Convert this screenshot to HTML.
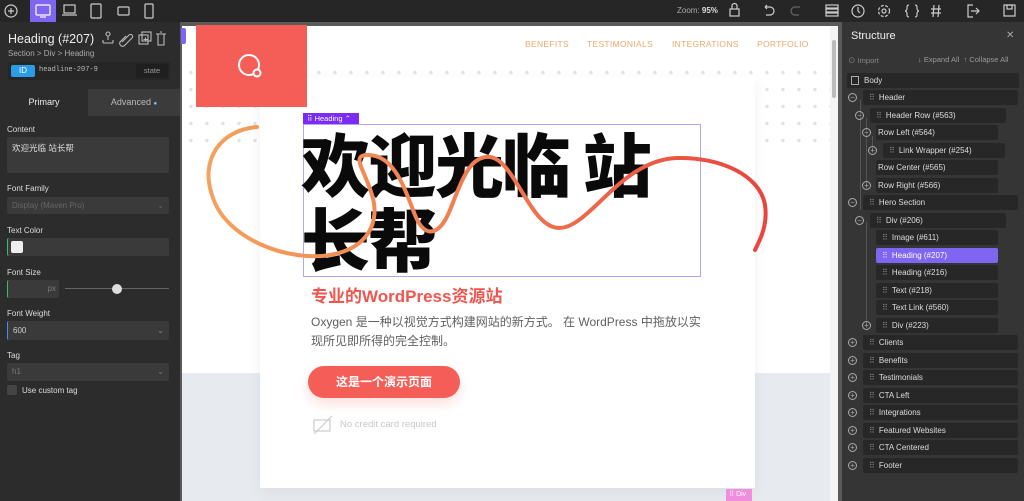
<!DOCTYPE html>
<html><head><meta charset="utf-8">
<style>
*{margin:0;padding:0;box-sizing:border-box}
body{width:1024px;height:501px;overflow:hidden;background:#2c2c2c;font-family:"Liberation Sans","Noto Sans CJK SC",sans-serif;position:relative;color:#ddd}
.a{position:absolute}
.top{left:0;top:0;width:1024px;height:22px;background:#262626}
.lbl{font-size:8px;color:#ddd}
.field{background:#3a3a3a;border-radius:2px}
.rp{left:842px;top:22px;width:182px;height:479px;background:#353535}
.row{position:absolute;height:15px;background:#272727;border-radius:2px;font-size:8px;color:#ddd;line-height:15px;padding-left:6px}
.row i{font-style:normal;color:#888;margin-right:5px;letter-spacing:-1px}
.circ{position:absolute;width:9px;height:9px;border:1px solid #aaa;border-radius:50%;font-size:8px;line-height:7px;text-align:center;color:#aaa}
.nav{font-size:8.5px;color:#eba96c;top:39px;letter-spacing:.3px}
</style></head><body>
<div class="a top"></div>
<div class="a" style="left:30px;top:0;width:26px;height:22px;background:#7e66f2"></div>
<svg class="a" style="left:0;top:0" width="180" height="22" fill="none" stroke="#ccc" stroke-width="1.2">
<circle cx="11" cy="11" r="6"/><path d="M11 8v6M8 11h6"/>
<rect x="36" y="5" width="14" height="10" rx="1" stroke="#fff"/><path d="M40 17h6" stroke="#fff"/>
<rect x="64" y="5" width="11" height="8"/><path d="M62 15h15"/>
<rect x="91" y="4" width="10" height="14" rx="1"/>
<rect x="118" y="7" width="11" height="8" rx="1"/>
<rect x="145" y="4" width="8" height="14" rx="1"/>
</svg>
<div class="a" style="left:677px;top:6px;font-size:8px;color:#aaa">Zoom: <b style="color:#ddd">95%</b></div>
<svg class="a" style="left:720px;top:0" width="304" height="22" fill="none" stroke="#ccc" stroke-width="1.2">
<rect x="10" y="9" width="9" height="7"/><path d="M12 9V6a2.5 2.5 0 0 1 5 0v3"/>
<path d="M45 7h5a4 4 0 0 1 0 8h-4M45 7l2-2M45 7l2 2"/>
<path d="M80 7h-5a4 4 0 0 0 0 8h4" stroke="#666"/>
<rect x="106" y="5" width="12" height="3"/><rect x="106" y="9" width="12" height="3"/><rect x="106" y="13" width="12" height="3"/>
<circle cx="138" cy="11" r="6"/><path d="M138 7v4l2 2"/>
<circle cx="164" cy="11" r="2"/><circle cx="164" cy="11" r="5.5" stroke-dasharray="3 1.5"/>
<path d="M189 5c-2 0-2 1-2 3s-1 3-2 3c1 0 2 1 2 3s0 3 2 3M195 5c2 0 2 1 2 3s1 3 2 3c-1 0-2 1-2 3s0 3-2 3"/>
<path d="M214 5l-1 12M219 5l-1 12M211 9h10M211 13h10"/>
<path d="M253 5h-5v12h5M251 11h8M256 8l3 3-3 3"/>
<rect x="284" y="5" width="11" height="11"/><rect x="287" y="5" width="5" height="4"/>
</svg>
<div class="a" style="left:8px;top:32px;font-size:12.5px;color:#eee">Heading (#207)</div>
<svg class="a" style="left:100px;top:30px" width="70" height="18" fill="none" stroke="#bbb" stroke-width="1.1">
<circle cx="8" cy="4" r="2"/><path d="M8 6v4M3 13h10M3 10v3M13 10v3"/>
<path d="M22 12l7-7a2 2 0 0 1 3 3l-8 8a3 3 0 0 1-4-4l6-6"/>
<rect x="39" y="5" width="9" height="9"/><rect x="42" y="2" width="9" height="9"/><path d="M43.5 9.5h4M45.5 7.5v4"/>
<path d="M56 4h10M58 4v11h6V4M60 2h2"/>
</svg>
<div class="a" style="left:8px;top:49px;font-size:8px;color:#aaa">Section &gt; Div &gt; Heading</div>
<div class="a" style="left:8px;top:62px;width:162px;height:18px;background:#262626;border-radius:2px"></div>
<div class="a" style="left:11px;top:64.5px;width:24px;height:12px;background:#2a9ce8;border-radius:2px;font-size:8px;color:#fff;text-align:center;line-height:12px">ID</div>
<div class="a" style="left:39px;top:66px;font-size:7px;font-family:'Liberation Mono',monospace;color:#bbb">headline-207-9</div>
<div class="a" style="left:136px;top:64px;width:32px;height:14px;background:#1f1f1f;font-size:7.5px;color:#999;text-align:center;line-height:14px">state</div>
<div class="a" style="left:0;top:89px;width:88px;height:27px;background:#2c2c2c;font-size:9px;color:#eee;text-align:center;line-height:27px">Primary</div>
<div class="a" style="left:88px;top:89px;width:92px;height:27px;background:#3b3b3b;font-size:9px;color:#bbb;text-align:center;line-height:27px">Advanced <span style="color:#7ec8ff;font-size:6px">●</span></div>
<div class="a" style="left:0;top:116px;width:180px;height:385px;background:#2c2c2c"></div>
<div class="a lbl" style="left:7px;top:125px">Content</div>
<div class="a field" style="left:7px;top:137px;width:162px;height:36px;font-size:8.5px;padding:5px 5px;color:#ddd">欢迎光临 站长帮</div>
<div class="a lbl" style="left:7px;top:184px">Font Family</div>
<div class="a field" style="left:7px;top:197px;width:162px;height:17px;font-size:8px;padding:4px 5px;color:#666">Display (Maven Pro)<span style="float:right">⌄</span></div>
<div class="a lbl" style="left:7px;top:226px">Text Color</div>
<div class="a field" style="left:7px;top:238px;width:162px;height:18px;border-left:1px solid #3bb87a"></div>
<div class="a" style="left:11px;top:241px;width:12px;height:12px;background:#eee;border-radius:2px"></div>
<div class="a lbl" style="left:7px;top:268px">Font Size</div>
<div class="a field" style="left:7px;top:280px;width:52px;height:18px;border-left:1px solid #3bb87a;font-size:8px;color:#777;text-align:right;padding:4px 3px">px</div>
<div class="a" style="left:65px;top:288px;width:104px;height:1px;background:#666"></div>
<div class="a" style="left:112px;top:284px;width:10px;height:10px;background:#ddd;border-radius:50%"></div>
<div class="a lbl" style="left:7px;top:309px">Font Weight</div>
<div class="a field" style="left:7px;top:321px;width:162px;height:19px;border-left:1px solid #4b8ee8;font-size:8px;padding:5px 5px;color:#ccc">600<span style="float:right;color:#888">⌄</span></div>
<div class="a lbl" style="left:7px;top:351px">Tag</div>
<div class="a field" style="left:7px;top:363px;width:162px;height:18px;font-size:8px;padding:4px 5px;color:#777">h1<span style="float:right">⌄</span></div>
<div class="a" style="left:7px;top:385px;width:10px;height:10px;background:#444;border-radius:2px"></div>
<div class="a lbl" style="left:22px;top:386px">Use custom tag</div>
<div class="a" style="left:180px;top:22px;width:662px;height:479px;background:#5a5a5a"></div>
<div class="a" style="left:182px;top:26px;width:648px;height:475px;background:#fff;overflow:hidden">
 <div class="a" style="left:0;top:38px;width:648px;height:80px;background-image:radial-gradient(circle,#e2e2e2 1.5px,transparent 2px);background-size:16px 17px;background-position:1px 0"></div>
 <div class="a" style="left:0;top:347px;width:648px;height:130px;background:#e7ebf0"></div>
 <div class="a" style="left:78px;top:51px;width:495px;height:411px;background:#fff;box-shadow:0 4px 14px rgba(0,0,0,.06)"></div>
</div>
<div class="a" style="left:830px;top:26px;width:8px;height:475px;background:#f4f4f4"></div>
<div class="a" style="left:832px;top:40px;width:4px;height:58px;background:#bbb;border-radius:2px"></div>
<div class="a" style="left:181px;top:28px;width:5px;height:16px;background:#7e66f2;border-radius:0 2px 2px 0"></div>
<div class="a nav" style="left:525px">BENEFITS</div>
<div class="a nav" style="left:587px">TESTIMONIALS</div>
<div class="a nav" style="left:672px">INTEGRATIONS</div>
<div class="a nav" style="left:757px">PORTFOLIO</div>
<div class="a" style="left:196px;top:25px;width:111px;height:82px;background:#f55d57"></div>
<svg class="a" style="left:236px;top:52px" width="30" height="30" fill="none" stroke="#fff" stroke-width="2"><circle cx="13" cy="13" r="10"/><circle cx="21" cy="21" r="3.5" fill="#f55d57"/></svg>
<div class="a" style="left:303px;top:124px;width:398px;height:153px;border:1px solid #b7a3f0"></div>
<div class="a" style="left:303px;top:113px;width:56px;height:11px;background:#7a2bf5;font-size:7.5px;color:#fff;line-height:11px;padding-left:4px">⠿ Heading ⌃</div>
<div class="a" style="left:301px;top:124px;width:400px;font-size:69px;font-weight:900;line-height:75px;color:#0a0a0a;font-family:'Noto Sans CJK SC',sans-serif;letter-spacing:-2px">欢迎光临 站<br>长帮</div>
<svg class="a" style="left:0;top:0" width="842" height="501" fill="none">
<defs><linearGradient id="g" x1="200" y1="0" x2="770" y2="0" gradientUnits="userSpaceOnUse"><stop offset="0" stop-color="#f4a25e"/><stop offset=".5" stop-color="#f07a50"/><stop offset="1" stop-color="#e8443e"/></linearGradient></defs>
<path d="M257,127 C220,130 200,160 212,195 C225,240 290,262 330,255 C370,248 380,220 372,195 C365,170 350,155 368,155 C395,155 405,190 415,215 C425,240 440,235 450,210 C462,180 470,155 490,157 C515,160 530,228 559,228 C590,228 620,160 677,158 C720,157 760,175 765,205 C768,225 760,240 755,250" stroke="url(#g)" stroke-width="4" stroke-linecap="round"/>
</svg>
<div class="a" style="left:311px;top:282px;font-size:17px;font-weight:700;color:#f0564f">专业的WordPress资源站</div>
<div class="a" style="left:311px;top:313px;width:400px;font-size:12px;line-height:19px;color:#606060">Oxygen 是一种以视觉方式构建网站的新方式。 在 WordPress 中拖放以实现所见即所得的完全控制。</div>
<div class="a" style="left:308px;top:366px;width:152px;height:32px;background:#f55d57;border-radius:16px;font-size:12px;font-weight:700;color:#fff;text-align:center;line-height:32px;box-shadow:0 6px 12px rgba(245,93,87,.2)">这是一个演示页面</div>
<svg class="a" style="left:312px;top:415px" width="22" height="20" fill="none" stroke="#ccc" stroke-width="1.2"><rect x="2" y="5" width="16" height="11"/><path d="M2 19L20 1"/></svg>
<div class="a" style="left:340px;top:419px;font-size:9.5px;color:#c8c8c8">No credit card required</div>
<div class="a" style="left:726px;top:489px;width:26px;height:12px;background:#f08ddc;font-size:7px;color:#fff;line-height:12px;padding-left:3px">⠿ Div</div>
<div class="a rp"></div>
<div class="a" style="left:851px;top:30px;font-size:11px;color:#eee">Structure</div>
<div class="a" style="left:1006px;top:30px;font-size:10px;color:#aaa">✕</div>
<div class="a" style="left:848px;top:55px;font-size:7.5px;color:#888">⊙ Import</div>
<div class="a" style="left:918px;top:55px;font-size:7.5px;color:#999">↓ Expand All &nbsp;↑ Collapse All</div>
<div class="a" style="left:860px;top:100px;width:1px;height:110px;background:#555"></div>
<div class="a" style="left:866px;top:118px;width:1px;height:70px;background:#555"></div>
<div class="a" style="left:872px;top:136px;width:1px;height:14px;background:#555"></div>
<div class="a" style="left:866px;top:222px;width:1px;height:104px;background:#555"></div>
<div class="a" style="left:847px;top:73px;width:172px;height:15px;background:#272727;border-radius:2px"></div>
<div class="a" style="left:851px;top:76px;width:8px;height:9px;border:1px solid #aaa"></div>
<div class="a" style="left:864px;top:76px;font-size:8px;color:#ddd">Body</div>
<div class="row" style="left:863px;top:90px;width:155px"><i>⠿</i>Header</div>
<div class="row" style="left:870px;top:108px;width:136px"><i>⠿</i>Header Row (#563)</div>
<div class="row" style="left:876px;top:125px;width:122px;padding-left:2px">Row Left (#564)</div>
<div class="row" style="left:883px;top:143px;width:122px"><i>⠿</i>Link Wrapper (#254)</div>
<div class="row" style="left:876px;top:160px;width:122px;padding-left:2px">Row Center (#565)</div>
<div class="row" style="left:876px;top:178px;width:122px;padding-left:2px">Row Right (#566)</div>
<div class="row" style="left:863px;top:195px;width:155px"><i>⠿</i>Hero Section</div>
<div class="row" style="left:870px;top:213px;width:136px"><i>⠿</i>Div (#206)</div>
<div class="row" style="left:876px;top:230px;width:122px"><i>⠿</i>Image (#611)</div>
<div class="row" style="left:876px;top:248px;width:122px;background:#7e66f2;color:#fff"><i style="color:#ddd">⠿</i>Heading (#207)</div>
<div class="row" style="left:876px;top:265px;width:122px"><i>⠿</i>Heading (#216)</div>
<div class="row" style="left:876px;top:283px;width:122px"><i>⠿</i>Text (#218)</div>
<div class="row" style="left:876px;top:300px;width:122px"><i>⠿</i>Text Link (#560)</div>
<div class="row" style="left:876px;top:318px;width:122px"><i>⠿</i>Div (#223)</div>
<div class="row" style="left:863px;top:335px;width:155px"><i>⠿</i>Clients</div>
<div class="row" style="left:863px;top:353px;width:155px"><i>⠿</i>Benefits</div>
<div class="row" style="left:863px;top:370px;width:155px"><i>⠿</i>Testimonials</div>
<div class="row" style="left:863px;top:388px;width:155px"><i>⠿</i>CTA Left</div>
<div class="row" style="left:863px;top:405px;width:155px"><i>⠿</i>Integrations</div>
<div class="row" style="left:863px;top:423px;width:155px"><i>⠿</i>Featured Websites</div>
<div class="row" style="left:863px;top:440px;width:155px"><i>⠿</i>CTA Centered</div>
<div class="row" style="left:863px;top:458px;width:155px"><i>⠿</i>Footer</div>
<div class="circ" style="left:848px;top:93px">−</div>
<div class="circ" style="left:855px;top:111px">−</div>
<div class="circ" style="left:862px;top:128px">−</div>
<div class="circ" style="left:868px;top:146px">+</div>
<div class="circ" style="left:862px;top:181px">+</div>
<div class="circ" style="left:848px;top:198px">−</div>
<div class="circ" style="left:855px;top:216px">−</div>
<div class="circ" style="left:862px;top:321px">+</div>
<div class="circ" style="left:848px;top:338px">+</div>
<div class="circ" style="left:848px;top:356px">+</div>
<div class="circ" style="left:848px;top:373px">+</div>
<div class="circ" style="left:848px;top:391px">+</div>
<div class="circ" style="left:848px;top:408px">+</div>
<div class="circ" style="left:848px;top:426px">+</div>
<div class="circ" style="left:848px;top:443px">+</div>
<div class="circ" style="left:848px;top:461px">+</div>
</body></html>
